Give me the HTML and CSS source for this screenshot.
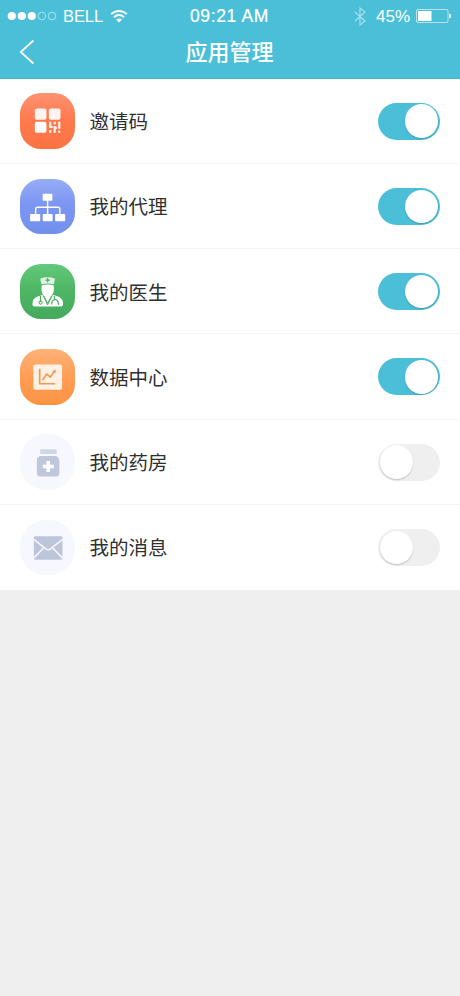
FILE: index.html
```html
<!DOCTYPE html>
<html lang="zh-CN">
<head>
<meta charset="utf-8">
<title>应用管理</title>
<link rel="stylesheet" href="styles.css">
</head>
<body>
<header class="header">
  <div class="status">
    <div class="status-left">
      <svg class="signal" width="50" height="10" viewBox="0 0 50 10"><g fill="#fff"><circle cx="4.8" cy="5" r="4.1"/><circle cx="14.8" cy="5" r="4.1"/><circle cx="24.8" cy="5" r="4.1"/></g><g fill="none" stroke="#fff" stroke-width=".7" opacity=".8"><circle cx="34.9" cy="5" r="3.8"/><circle cx="45" cy="5" r="3.8"/></g></svg>
      <span class="carrier">BELL</span>
      <svg class="wifi" width="18" height="14" viewBox="0 0 18 14"><g fill="none" stroke="#fff" stroke-width="2"><path d="M1.2 5.1C5.6.8 12.4.8 16.8 5.1"/><path d="M4 8.2c2.9-2.8 7.1-2.8 10 0"/></g><path d="M9 13.5 6 10.5c1.7-1.5 4.3-1.5 6 0z" fill="#fff"/></svg>
    </div>
    <span class="time">09:21 AM</span>
    <div class="status-right">
      <svg class="bluetooth" width="12" height="19" viewBox="0 0 12 19"><path d="M1 5l10 9-5 4V1l5 4-10 9" fill="none" stroke="#fff" stroke-width="1.2"/></svg>
      <span class="percent">45%</span>
      <svg class="battery" width="36" height="14" viewBox="0 0 36 14"><rect x=".5" y=".5" width="31.5" height="13" rx="1.5" fill="none" stroke="#fff" stroke-width=".8" opacity=".75"/><rect x="2" y="2" width="13.5" height="10" fill="#fff"/><path d="M33.2 4.5c2.6 1 2.6 4 0 5z" fill="#fff"/></svg>
    </div>
  </div>
  <div class="nav">
    <svg class="back" width="16" height="26" viewBox="0 0 16 26"><path d="M14.4 1.5 1.8 13l12.6 11.5" fill="none" stroke="#fff" stroke-width="1.8"/></svg>
    <h1 class="title">应用管理</h1>
  </div>
</header>
<main class="list">
  <div class="row">
    <div class="icon invite"><svg viewBox="0 0 55 55"><rect x="14.7" y="15.3" width="11.5" height="11.3" rx="2" fill="#fff4ef"/><rect x="28.6" y="15.3" width="11.5" height="11.3" rx="2" fill="#fff4ef"/><rect x="14.7" y="28.5" width="11.5" height="11" rx="2" fill="#fff"/><path d="M29.9 28.5v6.2m0 2v2.8M34.4 28.5v2.4m0 1.8v6.8M38.9 28.5v7m0 2v2M30 33.7h2.4M34 34.5h2.6" fill="none" stroke="#fff4ed" stroke-width="2.2"/></svg></div>
    <span class="label">邀请码</span><span class="toggle on"></span>
  </div>
  <div class="row">
    <div class="icon agent"><svg viewBox="0 0 55 55"><g fill="#fff"><rect x="22.5" y="14.7" width="9.6" height="6.8" rx=".7"/><rect x="10" y="34.8" width="10" height="7" rx=".7"/><rect x="22.5" y="34.8" width="9.8" height="7" rx=".7"/><rect x="34.8" y="34.8" width="10" height="7" rx=".7"/></g><path d="M27.4 21v14M15.5 35v-5q0-2 2-2h20q2 0 2 2v5" fill="none" stroke="#fff" stroke-width="1.4"/></svg></div>
    <span class="label">我的代理</span><span class="toggle on"></span>
  </div>
  <div class="row">
    <div class="icon doctor"><svg viewBox="0 0 55 55"><path d="M20 14.5q7.3-3.4 14.8 0l-1.3 5.6q-6-1.4-12.2 0z" fill="#dff4e4"/><path d="M27.4 13.7v4.4m-2.2-2.2h4.4" stroke="#48ad60" stroke-width="1.2"/><path d="M22.3 30.8 27.4 40l5.2-9.2c6 1.3 9.2 3.2 9.9 6.6.6 3.2 0 4.7-2.1 4.7H14.7c-2.2 0-2.8-1.5-2.1-4.8.8-3.3 3.8-5 9.7-6.5z" fill="#fff"/><path d="M21.6 21q5.8-1.3 11.7 0c.7 4.4.2 7.8-1.8 10.2l-1.2 1.3-2.9 5.6-2.9-5.6-1.2-1.3c-2-2.4-2.4-5.8-1.7-10.2z" fill="#fff"/><path d="M20.4 31.5v6M34 31.7l.2 3.4M31.5 40.2c-.5-6 5.8-6.5 6.3-2.2l.4 2.5" fill="none" stroke="#48ad60" stroke-width="1.2"/><path d="m23.2 31.6 4.2 9 4.3-9" fill="none" stroke="#48ad60" stroke-width=".9"/><circle cx="20.4" cy="38.2" r="1.6" fill="none" stroke="#48ad60"/></svg></div>
    <span class="label">我的医生</span><span class="toggle on"></span>
  </div>
  <div class="row">
    <div class="icon data"><svg viewBox="0 0 55 55"><rect x="13.2" y="15.3" width="28.5" height="25" rx="2" fill="#fff1e3"/><g fill="none" stroke="#f39850" stroke-width="1.6"><path d="M19.5 19.5v15h15.3"/><path d="M22.3 31 26.5 24.8l3.6 3 4.3-6.3" stroke-linejoin="round"/></g><path d="m32 22 3.4-1.6-.1 3.6z" fill="#f39850"/></svg></div>
    <span class="label">数据中心</span><span class="toggle on"></span>
  </div>
  <div class="row">
    <div class="icon muted"><svg viewBox="0 0 55 55"><rect x="20" y="15" width="16.4" height="4.8" rx=".8" fill="#d0d6e6"/><path d="M20 21.8h15.8q3.2 1.5 3.2 4v13.4q0 2.8-2.8 2.8H19.5q-2.8 0-2.8-2.8V25.8q0-2.5 3.3-4z" fill="#bfc7dc"/><path d="M28 26.8v10.8M22.6 32.2h10.8" stroke="#fff" stroke-width="3.6"/></svg></div>
    <span class="label">我的药房</span><span class="toggle"></span>
  </div>
  <div class="row">
    <div class="icon muted"><svg viewBox="0 0 55 55"><rect x="13.7" y="16" width="28.4" height="23.4" rx="1.5" fill="#bdc5da"/><path d="m13.7 19.2 11.5 9.2q2.7 2 5.4 0l11.5-9.2M13.7 37.5l9.5-9.5m9.4 0 9.5 9.5" fill="none" stroke="#f7f9fd" stroke-width="1.5"/></svg></div>
    <span class="label">我的消息</span><span class="toggle"></span>
  </div>
</main>
</body>
</html>
```
FILE: styles.css
```css
* { box-sizing: border-box; }
body {
  margin: 0;
  min-height: 996px;
  background: #efefef;
  color: #303030;
  font-family: "Noto Sans CJK SC", sans-serif;
}
svg { display: block; flex: none; }
.header {
  height: 78.5px;
  background: #4bbfd8;
  border-bottom: 1px solid #42b4cf;
  color: #fff;
}
.status {
  display: grid;
  grid-template-columns: 1fr auto 1fr;
  align-items: center;
  height: 31px;
  padding: 0 8px 0 7px;
  font: 17px/31px "Liberation Sans", sans-serif;
}
.status-left, .status-right { display: flex; align-items: center; }
.status-right { justify-content: flex-end; }
.carrier { width: 42px; margin: 1px 5px 0 6px; font-size: 16.5px; letter-spacing: -.1px; }
.time { padding-top: 1px; font-size: 17.5px; letter-spacing: .65px; -webkit-text-stroke: .2px #fff; }
.bluetooth { opacity: .5; }
.percent { margin: 1px 6px 0 10px; font-size: 17px; }
.nav {
  display: grid;
  grid-template-columns: 16px 1fr 16px;
  align-items: start;
  height: 42px;
  padding: 0 20px 0 19px;
}
.back { margin-top: 8px; }
.title {
  margin: 0;
  font-size: 22px;
  font-weight: 500;
  line-height: 38px;
  text-align: center;
}
.list { background: #fff; }
.row {
  display: flex;
  align-items: center;
  height: 85.25px;
  padding: 1px 20px 0 19.5px;
  border-bottom: 1px solid #f3f3f3;
}
.row:last-child { border-bottom-color: #fff; }
.icon { width: 55.5px; height: 55.5px; border-radius: 21px; }
.icon svg { width: 100%; height: 100%; }
.invite { background: linear-gradient(#ff9271, #ff7b50 45%, #fc7341); }
.agent { background: linear-gradient(#98adf7, #7c96f2 45%, #7290ed); }
.doctor { background: linear-gradient(#64c97b, #4eb765 45%, #46a95d); }
.data { background: linear-gradient(#ffb27a, #ff9f57 45%, #fd9342); }
.muted { background: #f6f8fd; border-radius: 26px; }
.label { flex: 1; margin-left: 14.5px; font-size: 19.5px; line-height: 30px; }
.toggle {
  display: flex;
  align-items: center;
  width: 62.5px;
  height: 37px;
  padding: 0 2px;
  border-radius: 19px;
  background: #efefef;
}
.toggle::before {
  content: "";
  width: 33.5px;
  height: 33.5px;
  border-radius: 50%;
  background: #fff;
  box-shadow: 0 1px 1.5px rgba(0, 0, 0, .2);
}
.toggle.on { justify-content: flex-end; background: #4bbfd8; }
```
